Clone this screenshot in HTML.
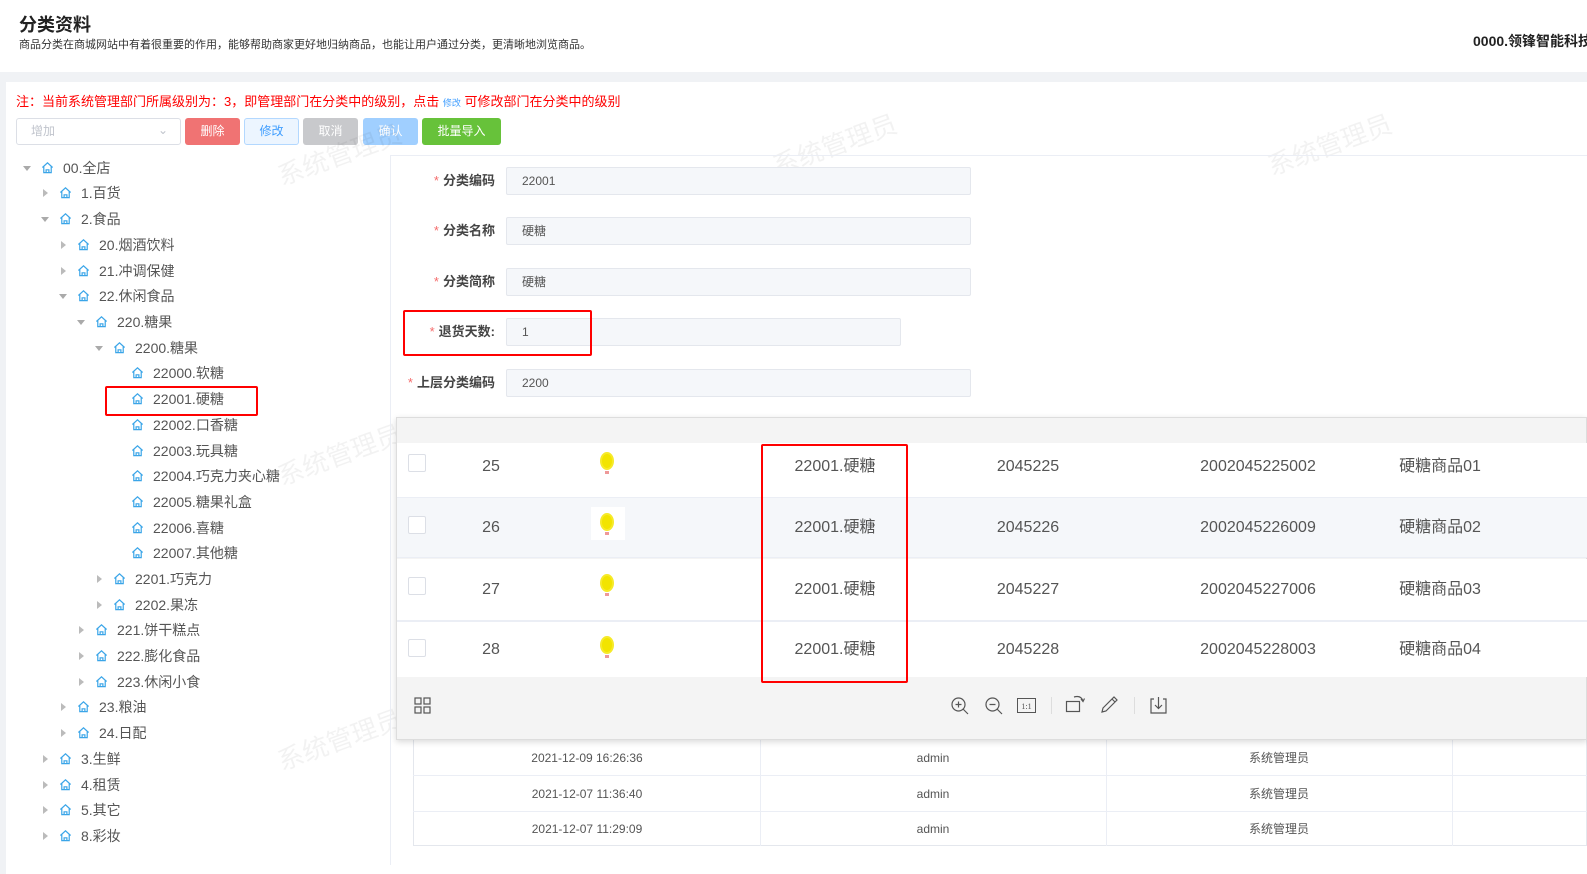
<!DOCTYPE html>
<html><head><meta charset="utf-8">
<style>
*{margin:0;padding:0;box-sizing:border-box}
body{width:1587px;height:874px;overflow:hidden;background:#f0f2f5;font-family:"Liberation Sans","Noto Sans CJK SC",sans-serif;position:relative;color:#606266;line-height:1.2}
.a{position:absolute}
.hdr{left:0;top:0;width:1587px;height:72px;background:#fff}
.card{left:6px;top:82px;width:1581px;height:792px;background:#fff}
.btn{position:absolute;top:118px;height:27px;border-radius:3px;font-size:12px;color:#fff;text-align:center;line-height:27px}
.tr{position:absolute;height:20px;font-size:14px;color:#555;line-height:20px;white-space:nowrap}
.tr .ar{display:inline-block;width:0;height:0;position:absolute;top:6px}
.op{border-left:4px solid transparent;border-right:4px solid transparent;border-top:5px solid #aaa;left:-18px;top:8px!important}
.cl{border-top:4px solid transparent;border-bottom:4px solid transparent;border-left:5px solid #bbb;left:-16px}
.tr svg{position:absolute;left:0;top:3px}
.tr span{position:absolute;left:17px}
.lbl{position:absolute;font-size:13px;font-weight:bold;color:#444;text-align:right;width:120px;line-height:18px}
.lbl b{color:#f56c6c;font-weight:normal;margin-right:4px}
.inp{position:absolute;height:28px;background:#f5f7fa;border:1px solid #e4e7ed;border-radius:2px;font-size:12px;color:#555;line-height:26px;padding-left:15px}
.wm{position:absolute;font-size:26px;color:rgba(0,0,0,0.05);transform:rotate(-20deg);white-space:nowrap}
.cell{position:absolute;font-size:16px;color:#555;transform:translateX(-50%);white-space:nowrap;height:20px;line-height:20px}
.cb{position:absolute;left:408px;width:18px;height:18px;border:1px solid #dcdfe6;border-radius:2px;background:#fff}
.lc{position:absolute;font-size:12px;color:#555;transform:translateX(-50%);line-height:14px;height:14px;white-space:nowrap}
</style></head><body>
<div class="a hdr"></div>
<div class="a" style="left:19px;top:14px;font-size:18px;font-weight:bold;color:#222;line-height:22px">分类资料</div>
<div class="a" style="left:19px;top:38px;font-size:11px;color:#333;line-height:14px">商品分类在商城网站中有着很重要的作用，能够帮助商家更好地归纳商品，也能让用户通过分类，更清晰地浏览商品。</div>
<div class="a" style="left:1473px;top:32px;font-size:14px;font-weight:bold;color:#222;white-space:nowrap;line-height:18px">0000.领锋智能科技</div>
<div class="a card"></div>

<div class="a" style="left:16px;top:94px;font-size:13px;color:#f00;white-space:nowrap;line-height:16px">注：当前系统管理部门所属级别为：3，即管理部门在分类中的级别，点击 <span style="font-size:9px;color:#409eff">修改</span> 可修改部门在分类中的级别</div>

<div class="a" style="left:16px;top:118px;width:165px;height:27px;border:1px solid #dcdfe6;border-radius:3px;font-size:12px;color:#c0c4cc;line-height:25px;padding-left:14px">增加<span style="position:absolute;right:12px;top:-1px;color:#c0c4cc">&#8964;</span></div>
<div class="btn" style="left:185px;width:55px;background:#f07373">删除</div>
<div class="btn" style="left:244px;width:55px;background:#ecf5ff;border:1px solid #b3d8ff;color:#409eff;line-height:25px">修改</div>
<div class="btn" style="left:303px;width:55px;background:#c8c9cc">取消</div>
<div class="btn" style="left:363px;width:55px;background:#a0cfff">确认</div>
<div class="btn" style="left:422px;width:79px;background:#67c23a">批量导入</div>

<div class="wm" style="left:275px;top:140px">系统管理员</div>
<div class="wm" style="left:770px;top:130px">系统管理员</div>
<div class="wm" style="left:1265px;top:130px">系统管理员</div>
<div class="wm" style="left:275px;top:440px">系统管理员</div>
<div class="wm" style="left:275px;top:725px">系统管理员</div>
<div class="wm" style="left:770px;top:725px">系统管理员</div>
<div class="wm" style="left:1265px;top:725px">系统管理员</div>

<svg width="0" height="0" style="position:absolute"><defs><symbol id="h" viewBox="0 0 14 14"><path d="M1.5 7 L7 2 L12.5 7 M3 6 V12.5 H11 V6 M5.5 12.5 V9.5 H8.5 V12.5" fill="none" stroke="#3aa5e8" stroke-width="1.3"/></symbol></defs></svg>

<div class="tr" style="left:41px;top:158px"><i class="ar op"></i><svg width="13" height="13"><use href="#h"/></svg><span style="left:22px">00.全店</span></div>
<div class="tr" style="left:59px;top:183px"><i class="ar cl"></i><svg width="13" height="13"><use href="#h"/></svg><span style="left:22px">1.百货</span></div>
<div class="tr" style="left:59px;top:209px"><i class="ar op"></i><svg width="13" height="13"><use href="#h"/></svg><span style="left:22px">2.食品</span></div>
<div class="tr" style="left:77px;top:235px"><i class="ar cl"></i><svg width="13" height="13"><use href="#h"/></svg><span style="left:22px">20.烟酒饮料</span></div>
<div class="tr" style="left:77px;top:261px"><i class="ar cl"></i><svg width="13" height="13"><use href="#h"/></svg><span style="left:22px">21.冲调保健</span></div>
<div class="tr" style="left:77px;top:286px"><i class="ar op"></i><svg width="13" height="13"><use href="#h"/></svg><span style="left:22px">22.休闲食品</span></div>
<div class="tr" style="left:95px;top:312px"><i class="ar op"></i><svg width="13" height="13"><use href="#h"/></svg><span style="left:22px">220.糖果</span></div>
<div class="tr" style="left:113px;top:338px"><i class="ar op"></i><svg width="13" height="13"><use href="#h"/></svg><span style="left:22px">2200.糖果</span></div>
<div class="tr" style="left:131px;top:363px"><svg width="13" height="13"><use href="#h"/></svg><span style="left:22px">22000.软糖</span></div>
<div class="tr" style="left:131px;top:389px"><svg width="13" height="13"><use href="#h"/></svg><span style="left:22px">22001.硬糖</span></div>
<div class="tr" style="left:131px;top:415px"><svg width="13" height="13"><use href="#h"/></svg><span style="left:22px">22002.口香糖</span></div>
<div class="tr" style="left:131px;top:441px"><svg width="13" height="13"><use href="#h"/></svg><span style="left:22px">22003.玩具糖</span></div>
<div class="tr" style="left:131px;top:466px"><svg width="13" height="13"><use href="#h"/></svg><span style="left:22px">22004.巧克力夹心糖</span></div>
<div class="tr" style="left:131px;top:492px"><svg width="13" height="13"><use href="#h"/></svg><span style="left:22px">22005.糖果礼盒</span></div>
<div class="tr" style="left:131px;top:518px"><svg width="13" height="13"><use href="#h"/></svg><span style="left:22px">22006.喜糖</span></div>
<div class="tr" style="left:131px;top:543px"><svg width="13" height="13"><use href="#h"/></svg><span style="left:22px">22007.其他糖</span></div>
<div class="tr" style="left:113px;top:569px"><i class="ar cl"></i><svg width="13" height="13"><use href="#h"/></svg><span style="left:22px">2201.巧克力</span></div>
<div class="tr" style="left:113px;top:595px"><i class="ar cl"></i><svg width="13" height="13"><use href="#h"/></svg><span style="left:22px">2202.果冻</span></div>
<div class="tr" style="left:95px;top:620px"><i class="ar cl"></i><svg width="13" height="13"><use href="#h"/></svg><span style="left:22px">221.饼干糕点</span></div>
<div class="tr" style="left:95px;top:646px"><i class="ar cl"></i><svg width="13" height="13"><use href="#h"/></svg><span style="left:22px">222.膨化食品</span></div>
<div class="tr" style="left:95px;top:672px"><i class="ar cl"></i><svg width="13" height="13"><use href="#h"/></svg><span style="left:22px">223.休闲小食</span></div>
<div class="tr" style="left:77px;top:697px"><i class="ar cl"></i><svg width="13" height="13"><use href="#h"/></svg><span style="left:22px">23.粮油</span></div>
<div class="tr" style="left:77px;top:723px"><i class="ar cl"></i><svg width="13" height="13"><use href="#h"/></svg><span style="left:22px">24.日配</span></div>
<div class="tr" style="left:59px;top:749px"><i class="ar cl"></i><svg width="13" height="13"><use href="#h"/></svg><span style="left:22px">3.生鲜</span></div>
<div class="tr" style="left:59px;top:775px"><i class="ar cl"></i><svg width="13" height="13"><use href="#h"/></svg><span style="left:22px">4.租赁</span></div>
<div class="tr" style="left:59px;top:800px"><i class="ar cl"></i><svg width="13" height="13"><use href="#h"/></svg><span style="left:22px">5.其它</span></div>
<div class="tr" style="left:59px;top:826px"><i class="ar cl"></i><svg width="13" height="13"><use href="#h"/></svg><span style="left:22px">8.彩妆</span></div>
<div class="a" style="left:105px;top:386px;width:153px;height:30px;border:2px solid #f00;border-radius:2px"></div>

<div class="a" style="left:390px;top:155px;width:1197px;height:710px;border-top:1px solid #ebeef5;border-left:1px solid #ebeef5"></div>
<div class="lbl" style="left:375px;top:172px"><b>*</b>分类编码</div>
<div class="inp" style="left:506px;top:167px;width:465px">22001</div>
<div class="lbl" style="left:375px;top:222px"><b>*</b>分类名称</div>
<div class="inp" style="left:506px;top:217px;width:465px">硬糖</div>
<div class="lbl" style="left:375px;top:273px"><b>*</b>分类简称</div>
<div class="inp" style="left:506px;top:268px;width:465px">硬糖</div>
<div class="lbl" style="left:375px;top:323px"><b>*</b>退货天数:</div>
<div class="inp" style="left:506px;top:318px;width:395px">1</div>
<div class="a" style="left:403px;top:310px;width:189px;height:46px;border:2px solid #f00;border-radius:2px"></div>
<div class="lbl" style="left:375px;top:374px"><b>*</b>上层分类编码</div>
<div class="inp" style="left:506px;top:369px;width:465px">2200</div>

<div class="a" style="left:413px;top:740px;width:1174px;height:106px;border:1px solid #e4e7ed;border-top:none;background:#fff"></div>
<div class="a" style="left:413px;top:775px;width:1174px;height:1px;background:#ebeef5"></div>
<div class="a" style="left:413px;top:811px;width:1174px;height:1px;background:#ebeef5"></div>
<div class="a" style="left:760px;top:740px;width:1px;height:106px;background:#ebeef5"></div>
<div class="a" style="left:1106px;top:740px;width:1px;height:106px;background:#ebeef5"></div>
<div class="a" style="left:1452px;top:740px;width:1px;height:106px;background:#ebeef5"></div>
<div class="lc" style="left:587px;top:751px">2021-12-09 16:26:36</div>
<div class="lc" style="left:933px;top:751px">admin</div>
<div class="lc" style="left:1279px;top:751px">系统管理员</div>
<div class="lc" style="left:587px;top:787px">2021-12-07 11:36:40</div>
<div class="lc" style="left:933px;top:787px">admin</div>
<div class="lc" style="left:1279px;top:787px">系统管理员</div>
<div class="lc" style="left:587px;top:822px">2021-12-07 11:29:09</div>
<div class="lc" style="left:933px;top:822px">admin</div>
<div class="lc" style="left:1279px;top:822px">系统管理员</div>

<div class="a" style="left:396px;top:417px;width:1191px;height:323px;background:#f4f4f4;border:1px solid #ddd;box-shadow:0 2px 6px rgba(0,0,0,0.15)"></div>
<div class="a" style="left:397px;top:443px;width:1190px;height:54px;background:#fff"></div>
<div class="a" style="left:397px;top:497px;width:1190px;height:61px;background:#f5f7fa;border-top:1px solid #ebeef5;border-bottom:1px solid #ebeef5"></div>
<div class="a" style="left:397px;top:559px;width:1190px;height:61px;background:#fff"></div>
<div class="a" style="left:397px;top:620px;width:1190px;height:57px;background:#fff;border-top:2px solid #ebeef5"></div>

<svg width="0" height="0" style="position:absolute"><defs><symbol id="bulb" viewBox="0 0 20 28"><ellipse cx="10" cy="11" rx="7" ry="9" fill="#f6ea2a"/><ellipse cx="10" cy="11" rx="5" ry="7" fill="#f2e400"/><rect x="8" y="21" width="4" height="3" fill="#e99"/></symbol></defs></svg>
<div class="cb" style="top:454px"></div>
<div class="cb" style="top:516px"></div>
<div class="cb" style="top:577px"></div>
<div class="cb" style="top:639px"></div>
<div class="cell" style="left:491px;top:457px">25</div>
<div class="cell" style="left:491px;top:518px">26</div>
<div class="cell" style="left:491px;top:580px">27</div>
<div class="cell" style="left:491px;top:640px">28</div>
<svg class="a" style="left:597px;top:450px" width="20" height="28"><use href="#bulb"/></svg>
<div class="a" style="left:591px;top:507px;width:34px;height:33px;background:#fff"></div>
<svg class="a" style="left:597px;top:511px" width="20" height="28"><use href="#bulb"/></svg>
<svg class="a" style="left:597px;top:572px" width="20" height="28"><use href="#bulb"/></svg>
<svg class="a" style="left:597px;top:634px" width="20" height="28"><use href="#bulb"/></svg>
<div class="cell" style="left:835px;top:457px">22001.硬糖</div>
<div class="cell" style="left:835px;top:518px">22001.硬糖</div>
<div class="cell" style="left:835px;top:580px">22001.硬糖</div>
<div class="cell" style="left:835px;top:640px">22001.硬糖</div>
<div class="cell" style="left:1028px;top:457px">2045225</div>
<div class="cell" style="left:1028px;top:518px">2045226</div>
<div class="cell" style="left:1028px;top:580px">2045227</div>
<div class="cell" style="left:1028px;top:640px">2045228</div>
<div class="cell" style="left:1258px;top:457px">2002045225002</div>
<div class="cell" style="left:1258px;top:518px">2002045226009</div>
<div class="cell" style="left:1258px;top:580px">2002045227006</div>
<div class="cell" style="left:1258px;top:640px">2002045228003</div>
<div class="cell" style="left:1440px;top:457px">硬糖商品01</div>
<div class="cell" style="left:1440px;top:518px">硬糖商品02</div>
<div class="cell" style="left:1440px;top:580px">硬糖商品03</div>
<div class="cell" style="left:1440px;top:640px">硬糖商品04</div>
<div class="a" style="left:761px;top:444px;width:147px;height:239px;border:2px solid #f00;border-radius:2px"></div>

<svg class="a" style="left:414px;top:697px" width="17" height="17" fill="none" stroke="#555" stroke-width="1.2"><rect x="1" y="1" width="6" height="6"/><rect x="10" y="1" width="6" height="6"/><rect x="1" y="10" width="6" height="6"/><rect x="10" y="10" width="6" height="6"/></svg>
<svg class="a" style="left:950px;top:696px" width="20" height="20" fill="none" stroke="#555" stroke-width="1.2"><circle cx="8.5" cy="8.5" r="6.5"/><path d="M13 13 L18 18 M5.5 8.5 H11.5 M8.5 5.5 V11.5"/></svg>
<svg class="a" style="left:984px;top:696px" width="20" height="20" fill="none" stroke="#555" stroke-width="1.2"><circle cx="8.5" cy="8.5" r="6.5"/><path d="M13 13 L18 18 M5.5 8.5 H11.5"/></svg>
<svg class="a" style="left:1017px;top:697px" width="20" height="17"><rect x="0.5" y="1.5" width="18" height="14" fill="none" stroke="#555"/><text x="9.5" y="12" font-size="8" text-anchor="middle" fill="#555" font-family="Liberation Serif">1:1</text></svg>
<div class="a" style="left:1051px;top:697px;width:1px;height:17px;background:#ddd"></div>
<svg class="a" style="left:1065px;top:694px" width="22" height="20" fill="none" stroke="#555" stroke-width="1.2"><rect x="1.5" y="7.5" width="13" height="10"/><path d="M9 3 Q16 1 18 7 M16 5 L18 7.5 L19.5 4.5"/></svg>
<svg class="a" style="left:1100px;top:695px" width="19" height="19" fill="none" stroke="#555" stroke-width="1.2"><path d="M2 17 L3 13 L14 2 L17 5 L6 16 Z M12 4 L15 7"/></svg>
<div class="a" style="left:1134px;top:697px;width:1px;height:17px;background:#ddd"></div>
<svg class="a" style="left:1149px;top:695px" width="19" height="20" fill="none" stroke="#555" stroke-width="1.2"><path d="M5 4 H2 V18 H17 V4 H14 M9.5 2 V13 M6 10 L9.5 13.5 L13 10"/></svg>
</body></html>
